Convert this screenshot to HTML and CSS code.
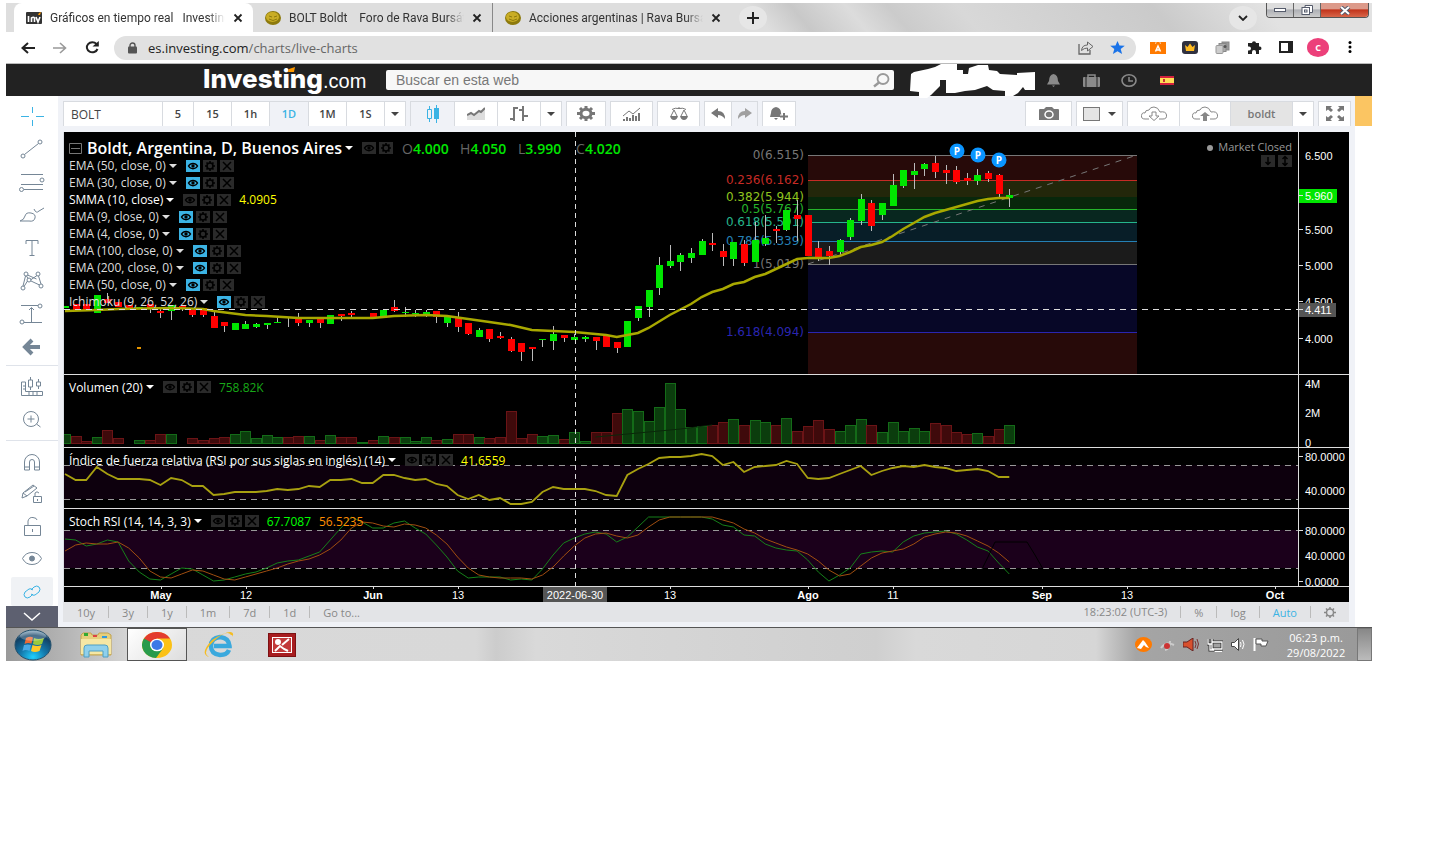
FILE: index.html
```html
<!DOCTYPE html>
<html lang="es">
<head>
    <meta charset="UTF-8">
    <meta name="viewport" content="width=device-width, initial-scale=1.0">
    <title>Gráficos en tiempo real - Investing.com</title>
    <link rel="stylesheet" href="styles.css">
</head>
<body>

<svg class="symbols" aria-hidden="true">
  <symbol id="eye" viewBox="0 0 14 12"><path d="M2.5 6C4.5 2.5 9.5 2.5 11.5 6C9.5 9.5 4.5 9.5 2.5 6Z" fill="none" stroke="currentColor" stroke-width="1.5"/><circle cx="7" cy="6" r="1.7" fill="currentColor"/></symbol>
  <symbol id="gear" viewBox="0 0 14 12"><circle cx="7" cy="6" r="3" fill="none" stroke="currentColor" stroke-width="1.6"/><path d="M7 1v2M7 9v2M2 6h2M10 6h2M3.5 2.5l1.4 1.4M9.1 8.1l1.4 1.4M10.5 2.5L9.1 3.9M4.9 8.1L3.5 9.5" stroke="currentColor" stroke-width="1.6"/></symbol>
  <symbol id="cross" viewBox="0 0 14 12"><path d="M3 2l8 8M11 2l-8 8" stroke="currentColor" stroke-width="1.5"/></symbol>
  <symbol id="close" viewBox="0 0 10 10"><path d="M1.5 1.5l7 7M8.5 1.5l-7 7" stroke="#222" stroke-width="1.8"/></symbol>
  <symbol id="coin" viewBox="0 0 16 14"><ellipse cx="8" cy="7" rx="8" ry="7" fill="#8d7a0c"/><ellipse cx="7.5" cy="6" rx="6.5" ry="5" fill="#c9ad25"/><path d="M4 5l3 1M9 6l3-1M4 8q4 3 8 0" stroke="#8d7a0c" fill="none"/></symbol>
</svg>

<div class="desktop">

  <div class="tabs">
    <div class="tab active">
      <svg width="16" height="12"><rect width="16" height="12" rx="1" fill="#333"/><path d="M2.5 4v6M5.500 10V6q2-1.500 3 0v4M10 5l2 5 2-5" stroke="#fff" stroke-width="1.6" fill="none"/><path d="M12 3l1-2 2-1-1 3z" fill="#f90"/></svg>
      <a href="#">Gráficos en tiempo real &nbsp; Investing.com</a>
      <button aria-label="Cerrar"><svg width="10" height="10"><use href="#close"/></svg></button>
    </div>
    <div class="tab">
      <svg width="16" height="14"><use href="#coin"/></svg>
      <a href="#">BOLT Boldt &nbsp;&nbsp; Foro de Rava Bursátil</a>
      <button aria-label="Cerrar"><svg width="10" height="10"><use href="#close"/></svg></button>
    </div>
    <div class="tab last">
      <svg width="16" height="14"><use href="#coin"/></svg>
      <a href="#">Acciones argentinas | Rava Bursátil</a>
      <button aria-label="Cerrar"><svg width="10" height="10"><use href="#close"/></svg></button>
    </div>
    <button class="round" aria-label="Nueva pestaña"><svg width="12" height="12"><path d="M6 0v12M0 6h12" stroke="#222" stroke-width="2"/></svg></button>
    <button class="round search-tabs" aria-label="Buscar pestañas"><svg width="10" height="6"><path d="M1 1l4 4 4-4" stroke="#222" stroke-width="1.8" fill="none"/></svg></button>
    <div class="window-buttons">
      <button aria-label="Minimizar"><svg width="12" height="6"><rect x=".5" y="1.5" width="11" height="3" fill="#fff" stroke="#555b6b"/></svg></button>
      <button aria-label="Restaurar"><svg width="12" height="10"><path d="M4 .5h7.5v7H9M4 .5V2" fill="#fff" stroke="#555b6b"/><rect x="1" y="2.5" width="7.5" height="7" fill="#fff" stroke="#555b6b"/><rect x="3.5" y="5" width="2.5" height="2" fill="#fff" stroke="#555b6b"/></svg></button>
      <button class="close" aria-label="Cerrar"><svg width="12" height="9"><path d="M2 1l8 7M10 1L2 8" stroke="#555b6b" stroke-width="4"/><path d="M2 1l8 7M10 1L2 8" stroke="#fff" stroke-width="2"/></svg></button>
    </div>
  </div>

  <div class="address-row">
    <button aria-label="Atrás"><svg width="14" height="12"><path d="M14 6H2M7 1L1.5 6 7 11" stroke="#222" stroke-width="2" fill="none"/></svg></button>
    <button aria-label="Adelante"><svg width="14" height="12"><path d="M0 6h12M7 1l5.5 5L7 11" stroke="#999" stroke-width="1.6" fill="none"/></svg></button>
    <button aria-label="Recargar"><svg width="14" height="13"><path d="M11.5 3A5.5 5 0 1 0 12.5 8" stroke="#222" stroke-width="2" fill="none"/><path d="M13.8 0v5.5H7.5z" fill="#222"/></svg></button>
    <div class="omnibox">
      <svg width="9" height="12"><rect y="4.5" width="9" height="7" rx="1" fill="#555"/><path d="M2 5V3.5a2.5 2.5 0 0 1 5 0V5" stroke="#555" stroke-width="1.4" fill="none"/></svg>
      <span class="url">es.investing.com<span>/charts/live-charts</span></span>
      <button aria-label="Compartir"><svg width="16" height="14"><path d="M1 3v10h11V9" stroke="#666" stroke-width="1.3" fill="none"/><path d="M3.5 9.5Q4 4 9.5 4V1l5.500 4.500-5.500 4.500V7Q6 7 3.5 9.5z" stroke="#666" fill="none"/></svg></button>
      <button aria-label="Favorito"><svg width="15" height="13"><path d="M7.5 0l2 4.400 5.300.4-4.100 3.300 1.400 4.900-4.600-2.700L2.900 13l1.400-4.900L.2 4.800l5.300-.4z" fill="#1a73e8"/></svg></button>
    </div>
    <div class="extensions">
      <button aria-label="Tienda"><svg width="16" height="13"><path d="M0 1h16v12H0z" fill="#ff7a00"/><path d="M5.500 3Q5.500 0 8 0t2.500 3" stroke="#fff" fill="none" opacity=".6"/><path d="M5.500 10.500L8 5l2.500 5.500M6.500 9h3" stroke="#fff" stroke-width="1.500" fill="none"/></svg></button>
      <button aria-label="Corona"><svg width="16" height="13"><rect width="16" height="13" rx="3" fill="#30313f"/><path d="M3 4l2.500 2L8 2.500 10.500 6 13 4l-1 6H4z" fill="#fb2"/></svg></button>
      <button aria-label="Copias"><svg width="15" height="13"><rect x="7" y="1" width="7" height="8" fill="#999" stroke="#888"/><rect x="4" y="2.500" width="7" height="8" fill="#aaa" stroke="#888"/><rect x="1" y="4.500" width="7" height="8" rx="1" fill="#ccc" stroke="#999"/><circle cx="10" cy="5.500" r="1.500" fill="#555"/></svg></button>
      <button aria-label="Extensiones"><svg width="15" height="13"><path d="M1 2h4a2 1.800 0 1 1 4 0h3v3.500a2 1.800 0 1 1 0 3.500v4H9V11a2 2 0 0 0-4 0v2H1V9.500h1a1.800 1.800 0 0 0 0-4H1z" fill="#222"/></svg></button>
      <button aria-label="Panel lateral"><svg width="14" height="12"><rect x="1" y="1" width="12" height="10" fill="none" stroke="#222" stroke-width="2"/><path d="M9 1h4v10H9z" fill="#222"/></svg></button>
      <button class="avatar" aria-label="Perfil">C</button>
      <button aria-label="Menú"><svg width="4" height="12"><circle cx="2" cy="1.500" r="1.500"/><circle cx="2" cy="6" r="1.500"/><circle cx="2" cy="10.500" r="1.500"/></svg></button>
    </div>
  </div>

  <header class="site-header">
    <a class="logo" href="#"><b>Investing</b>.com<svg width="8" height="5"><path d="M0 5l1-3 6-2-1 5z" fill="#f90"/></svg></a>
    <form class="search">
      <input type="text" aria-label="Buscar" placeholder="Buscar en esta web">
      <button type="button" aria-label="Buscar"><svg width="17" height="15"><ellipse cx="10" cy="6" rx="5.500" ry="5" fill="none" stroke="#999" stroke-width="1.800"/><path d="M6 9.500L1 13.500" stroke="#999" stroke-width="2.400"/></svg></button>
    </form>
    <svg class="scribble" width="126" height="32"><path d="M1 10L4 8 18 5 25 3 31 0H47V6H53V10H58L59 4 68 1H78L79 6 87 7 90 10 107 11V9L125 8V26H115L113 23 108 29 103 32H95V27L83 26 77 22 65 26 55 27 45 29H36V16H30V22L21 31 17 34H9V28L0 27Z" fill="#fff"/></svg>
    <button aria-label="Alertas"><svg width="13" height="13"><path d="M6.500 0Q11 1 11 7l2 3.500H0L2 7Q2 1 6.500 0zM5 11.500h3L6.500 13z" fill="#8a8a8a"/></svg></button>
    <button aria-label="Cartera"><svg width="17" height="13"><path d="M5 3V1h7v2" fill="none" stroke="#8a8a8a" stroke-width="1.500"/><path d="M3.500 3h10v10h-10zM0 4q0-1 1-1h1.500v10H1q-1 0-1-1zM14.500 3H16q1 0 1 1v8q0 1-1 1h-1.500z" fill="#8a8a8a"/></svg></button>
    <button aria-label="Hora"><svg width="16" height="13"><ellipse cx="8" cy="6.500" rx="7" ry="5.700" fill="none" stroke="#8a8a8a" stroke-width="1.600"/><path d="M8 3v4h4" fill="none" stroke="#8a8a8a" stroke-width="1.500"/></svg></button>
    <button aria-label="España"><svg width="14" height="9"><rect width="14" height="9" fill="#d4213d"/><rect y="2" width="14" height="5" fill="#fd5"/><rect x="3" y="3" width="2" height="3" fill="#c33"/></svg></button>
  </header>

  <div class="workspace">
    <nav class="tools">
      <div class="tool-group">
        <button class="on" aria-label="Cruz"><svg width="23" height="20"><path d="M0 10.500h8M15 10.500h8M11.500 1v6M11.500 14v6"/></svg></button>
        <button aria-label="Línea"><svg width="24" height="20"><circle cx="3" cy="17" r="2"/><circle cx="20" cy="3" r="2"/><path d="M4.500 15.500l14-11"/></svg></button>
        <button aria-label="Fibonacci"><svg width="26" height="20"><path d="M2 2.500h22M2 12.500h22M5 17.500h19"/><circle cx="23" cy="8" r="2"/><circle cx="2.500" cy="17.500" r="2"/></svg></button>
        <button aria-label="Pincel"><svg width="24" height="16"><path d="M0 14Q4 13 5 9t6-3 4 5-6 3zM14 2q2 5 5 2l5-3"/></svg></button>
        <button aria-label="Texto"><svg width="14" height="16"><path d="M1 4V.5h12V4M7 .5v15M4.500 15.500h5"/></svg></button>
        <button aria-label="Patrones"><svg width="24" height="20"><path d="M3 15L5.500 5M7.500 4l9 4M10.500 9L17 4.500M18.500 5l2.500 8M19.500 14L11 10M7.500 10L4 15.500M6.500 5L8 7.500"/><circle cx="3" cy="17" r="2"/><circle cx="6" cy="3" r="2"/><circle cx="9" cy="9" r="2"/><circle cx="18" cy="3" r="2"/><circle cx="21" cy="15" r="2"/></svg></button>
        <button aria-label="Medición"><svg width="24" height="20"><path d="M1 1.500h17M4 18.500h18M11.500 4v14M9 6l2.500-2.500L14 6"/><circle cx="20" cy="2" r="2"/><circle cx="2" cy="18" r="2"/></svg></button>
        <button aria-label="Atrás"><svg width="18" height="16"><path d="M17 8H3M9 1L2 8l7 7" stroke-width="4"/></svg></button>
      </div>
      <div class="tool-group">
        <button aria-label="Regla"><svg width="24" height="20"><path d="M1.500 5v13.500h21v-4H5.500V5zM5 9H3M5 12H3M9 15v3M13 15v3M17 15v3M10.500 0v3M10.500 10v3M18.500 2v3M18.500 9v3M8.500 3h4v7h-4zM16.500 5h4v4h-4z"/></svg></button>
        <button aria-label="Ampliar"><svg width="20" height="17"><circle cx="9" cy="8" r="7.500"/><path d="M14.500 13l4 3M5.500 8h7M9 4.500v7"/></svg></button>
      </div>
      <div class="tool-group">
        <button aria-label="Imán"><svg width="16" height="17"><path d="M.5 16V8a7.500 7.500 0 0 1 15 0v8h-5V8a2.500 2.500 0 0 0-5 0v8zM.5 13h5M10.500 13h5"/></svg></button>
        <button aria-label="Bloquear dibujo"><svg width="22" height="20"><path d="M1 14l1-5L12 1l4 3L6 12zM2 9l4 3M4 8l9-6M12.500 12.500h8v6h-8zM14 12V9q2-2.500 4 0M16.500 15v2"/></svg></button>
        <button aria-label="Desbloquear"><svg width="17" height="19"><path d="M.5 8.500h16v10H.5zM4 8V4q1-4 5-3.500T13 3M8.500 12v3"/></svg></button>
        <button aria-label="Mostrar"><svg width="20" height="13"><path d="M.5 6.500Q3.500.5 10 .5t9.500 6q-3 6-9.500 6t-9.500-6z"/><circle cx="10" cy="6.500" r="2.500" fill="#758696"/></svg></button>
        <button class="on boxed" aria-label="Enlazar"><svg width="18" height="14"><path d="M8 5l3-3q3-2 5 0t0 5l-4 3q-2 1-4-1M10 9l-3 3q-3 2-5 0t0-5l4-3q2-1 4 1"/></svg></button>
      </div>
      <button class="collapse" aria-label="Plegar"><svg width="18" height="8"><path d="M1 0l8 7 8-7" fill="none" stroke="#fff" stroke-width="1.500"/></svg></button>
    </nav>

    <main>
      <div class="chart-bar">
        <div class="group">
          <input class="symbol" type="text" aria-label="Símbolo" value="BOLT">
          <button class="w30">5</button><button>15</button><button>1h</button><button class="on w39">1D</button><button>1M</button><button>1S</button>
          <button class="w20" aria-label="Más intervalos"><i class="caret"></i></button>
        </div>
        <div class="group">
          <button class="on w43" aria-label="Velas"><svg width="13" height="18"><path d="M3.500 1v3M3.500 13v4M10.500 0v18" stroke="#3bb3e4"/><path d="M1.500 4.500h4v9h-4z" fill="none" stroke="#3bb3e4"/><path d="M8 3h5v11H8z" fill="#3bb3e4"/></svg></button>
          <button class="w43" aria-label="Área"><svg width="18" height="13"><path d="M0 8l4-2 3 2 5-4 2 1 4-4v12H0z" fill="#ddd"/><path d="M0 8l4-2 3 2 5-4 2 1 4-4" fill="none" stroke="#777" stroke-width="2"/></svg></button>
          <button class="w43" aria-label="Barras"><svg width="18" height="15"><path d="M0 13h4M4 15V1M4 2h4M13 0v15M9 4h4M13 10h5" fill="none" stroke="#777" stroke-width="2"/></svg></button>
          <button class="w20" aria-label="Más estilos"><i class="caret"></i></button>
        </div>
        <div class="group">
          <button aria-label="Propiedades"><svg width="18" height="15"><ellipse cx="9" cy="7.500" rx="5" ry="4.200" fill="none" stroke="#777" stroke-width="3"/><path d="M9 0v3M9 12v3M0 7.500h3M15 7.500h3M3 2l2 2M15 2l-2 2M3 13l2-2M15 13l-2-2" stroke="#777" stroke-width="3"/></svg></button>
        </div>
        <div class="group">
          <button class="w41" aria-label="Indicadores"><svg width="18" height="14"><path d="M1 12v2M4 10v4M7 11v3M10 8v6M13 9v5M16 6v8" stroke="#777" stroke-width="2"/><path d="M0 9l6-5 4 3 7-6" fill="none" stroke="#777"/></svg></button>
        </div>
        <div class="group">
          <button class="w41" aria-label="Comparar"><svg width="18" height="14"><path d="M2 2.500q3-2 7-1 4-1 7 1M9 0v1M4 3L1 9M4 3l3 6M14 3l-3 6M14 3l3 6" fill="none" stroke="#777"/><path d="M0 9h8q-1 4-4 4T0 9zM10 9h8q-1 4-4 4t-4-4z" fill="#777"/></svg></button>
        </div>
        <div class="group">
          <button class="w26" aria-label="Deshacer"><svg width="14" height="11"><path d="M0 5l7-5v3q7 0 7 8-3-4-7-4v3z" fill="#777"/></svg></button>
          <button class="w26 off" aria-label="Rehacer"><svg width="14" height="11"><path d="M14 5L7 0v3Q0 3 0 11q3-4 7-4v3z" fill="#a0a0a0"/></svg></button>
        </div>
        <div class="group">
          <button class="w32" aria-label="Crear alerta"><svg width="18" height="14"><path d="M6 0q5 1 5 6l1 4H0l1-4Q1 1 6 0zM4 11h4l-2 2z" fill="#777"/><path d="M14 6v7M10 9.500h8" stroke="#fff" stroke-width="4"/><path d="M14 6v7M10 9.500h8" stroke="#777" stroke-width="2"/></svg></button>
        </div>
        <div class="group push">
          <button class="w45" aria-label="Imagen"><svg width="20" height="13"><path d="M0 3q0-1 1-1h4l2-2h6l2 2h4q1 0 1 1v10H0z" fill="#777"/><ellipse cx="10" cy="7.500" rx="4" ry="3.500" fill="none" stroke="#fff" stroke-width="1.500"/></svg></button>
        </div>
        <div class="group">
          <button class="w45" aria-label="Diseño"><svg width="17" height="14"><rect x=".5" y=".5" width="16" height="13" fill="#e4e4e4" stroke="#777"/></svg><i class="caret"></i></button>
        </div>
        <div class="group">
          <button class="w51" aria-label="Cargar"><svg width="26" height="15"><path d="M8 13H4Q0 13 .5 9.500T4 7q0-3 4-3 1-3 5-3t6 5q6-1 6.500 3T22 13h-4M11 6h4v4h3l-5 4.500L8 10h3z" fill="none" stroke="#888"/></svg></button>
          <button class="w51" aria-label="Guardar"><svg width="26" height="15"><path d="M8 13H4Q0 13 .5 9.500T4 7q0-3 4-3 1-3 5-3t6 5q6-1 6.500 3T22 13h-4" fill="none" stroke="#888"/><path d="M13 6l5 4h-3v5h-4v-5H8z" fill="#888"/></svg></button>
          <button class="layout-name">boldt</button>
          <button class="w20" aria-label="Más diseños"><i class="caret"></i></button>
        </div>
        <div class="group">
          <button class="w30" aria-label="Pantalla completa"><svg width="18" height="15"><path d="M0 0h6L4.300 1.700 7 4 5 6 2 3.500 0 5zM18 0h-6l1.700 1.700L11 4l2 2 3-2.500L18 5zM0 15h6l-1.700-1.700L7 11 5 9l-3 2.500L0 10zM18 15h-6l1.700-1.700L11 11l2-2 3 2.500 2-1.500z" fill="#777"/></svg></button>
        </div>
      </div>

      <div class="chart">
        <section class="pane price">
          <svg class="plot" id="price-plot"></svg>
          <svg class="axis" id="price-axis"></svg>
          <div class="legend">
            <h1><svg width="13" height="11"><path d="M.5 .5h12v10H.5zM2 5.500h9" fill="none" stroke="#777"/></svg>Boldt, Argentina, D, Buenos Aires<i class="caret"></i><span class="chips"><button aria-label="Mostrar"><svg><use href="#eye"/></svg></button><button aria-label="Formato"><svg><use href="#gear"/></svg></button></span>
              <span class="ohlc">O<b>4.000</b></span><span class="ohlc">H<b>4.050</b></span><span class="ohlc">L<b>3.990</b></span><span class="ohlc">C<b>4.020</b></span></h1>
            <ul id="studies"></ul>
          </div>
          <div class="market">
            <span>Market Closed</span>
            <div class="chips"><button aria-label="Bajar"><svg viewBox="0 0 14 12"><path d="M7 2v7M4.500 7L7 9.500 9.500 7" fill="none" stroke="currentColor" stroke-width="1.500"/></svg></button><button aria-label="Ajustar"><svg viewBox="0 0 14 12"><path d="M7 2v8M4.500 4L7 1.500 9.500 4M4.500 8L7 10.500 9.500 8" fill="none" stroke="currentColor" stroke-width="1.500"/></svg></button></div>
          </div>
        </section>
        <section class="pane volume">
          <svg class="plot" id="volume-plot"></svg>
          <svg class="axis" id="volume-axis"></svg>
          <div class="legend" data-name="Volumen (20)" data-values="758.82K:#18a818"></div>
        </section>
        <section class="pane rsi">
          <svg class="plot" id="rsi-plot"></svg>
          <svg class="axis" id="rsi-axis"></svg>
          <div class="legend" data-name="Índice de fuerza relativa (RSI por sus siglas en inglés) (14)" data-values="41.6559:#ffff00"></div>
        </section>
        <section class="pane stoch">
          <svg class="plot" id="stoch-plot"></svg>
          <svg class="axis" id="stoch-axis"></svg>
          <div class="legend" data-name="Stoch RSI (14, 14, 3, 3)" data-values="67.7087:#00ff00 56.5235:#ff8c00"></div>
        </section>
        <svg class="time-axis" id="time-axis"></svg>
        <i class="crosshair"></i>
      </div>

      <div class="range-bar">
        <button>10y</button><button>3y</button><button>1y</button><button>1m</button><button>7d</button><button>1d</button><button>Go to...</button>
        <span class="clock">18:23:02 (UTC-3)</span>
        <button>%</button><button>log</button><button class="on">Auto</button><button aria-label="Ajustes"><svg width="12" height="11"><circle cx="6" cy="5.500" r="3.500" fill="none" stroke="#888" stroke-width="1.500"/><path d="M6 0v2M6 9v2M0 5.500h2M10 5.500h2M2 1.500l1.400 1.400M8.600 8.100L10 9.500M10 1.500L8.600 2.900M3.400 8.100L2 9.500" stroke="#888" stroke-width="1.500"/></svg></button>
      </div>
    </main>
    <aside><div class="banner"></div></aside>
  </div>

  <footer class="taskbar">
    <button class="start" aria-label="Inicio"><svg width="38" height="32">
      <defs><radialGradient id="orb" cx=".5" cy=".9" r=".9"><stop offset="0" stop-color="#1fd0ff"/><stop offset=".4" stop-color="#1478ab"/><stop offset=".8" stop-color="#123f63"/><stop offset="1" stop-color="#9ab9cc"/></radialGradient></defs>
      <ellipse cx="19" cy="16" rx="18" ry="15" fill="url(#orb)" stroke="#24506c"/>
      <path d="M12 9q4-2 7-.5l-1.500 6q-4-1-7 .5z" fill="#ee6a35"/><path d="M20 9q4 2 10 0l-2 6q-5 2-9 0z" fill="#9aca3c"/><path d="M10 16q4-1 7 0l-1.500 6q-4-2-7 0z" fill="#4aa9e6"/><path d="M18.500 16q5 2 9 0l-2 6q-5 2-8.500 0z" fill="#ffc928"/>
      <ellipse cx="19" cy="7" rx="13" ry="5" fill="#fff" opacity=".25"/></svg></button>
    <button aria-label="Explorador"><svg width="32" height="26"><path d="M1 3l2-2h8l1 2h6l1-2h9l3 2v20H1z" fill="#e6cf7c" stroke="#c1a350"/><path d="M4 1h4v3H4z" fill="#3a3"/><path d="M13 3h4v2h-4z" fill="#d44"/><path d="M22 4h5v2h-5z" fill="#39d"/><path d="M1 7h30v15H1z" fill="#f6e7a4"/><path d="M4 25V16q0-3 3-3h18q3 0 3 3v9h-5v-6H9v6z" fill="#8fd0ec" stroke="#4f9fc4"/></svg></button>
    <button class="active" aria-label="Chrome"><svg width="30" height="26" viewBox="0 0 30 26"><ellipse cx="15" cy="13" rx="15" ry="13" fill="#fbc116"/><path d="M2 6.500A15 13 0 0 1 28 6.500H15L8 16z" fill="#e33b2e"/><path d="M2 6.500A15 13 0 0 0 14 26l7-9.500-6-3z" fill="#289b4b"/><ellipse cx="15" cy="13" rx="7" ry="6.300" fill="#fff"/><ellipse cx="15" cy="13" rx="5.500" ry="5" fill="#3b78e7"/></svg></button>
    <button aria-label="Internet Explorer"><svg width="30" height="26"><path d="M25 18q-2 5-9 5-9-1-9-9t9-9q9 1 9.500 9H10" fill="none" stroke="#3ba9dd" stroke-width="4.500"/><path d="M5 25Q-3 21 10 9T27 3q3 0 1 4 3-7-2-7T8 8Q-5 22 5 25z" fill="#f4bc22"/></svg></button>
    <button aria-label="Editor de imágenes"><svg width="28" height="24"><rect x=".5" y=".5" width="27" height="23" fill="#a81d20" stroke="#7c1113"/><rect x="4.500" y="4.500" width="19" height="15" fill="#c23a3a" stroke="#fff"/><circle cx="10" cy="9" r="3" fill="#fff"/><path d="M7 18l5-5 4 3 4 2M14 12l7-6" stroke="#fff" stroke-width="2" fill="none"/></svg></button>
    <div class="tray">
      <svg width="17" height="15"><ellipse cx="8.500" cy="7.500" rx="8.500" ry="7.500" fill="#ff7a00"/><path d="M2 11l6-8 2 2 4 6-3-1-2-2-3 4z" fill="#fff"/></svg>
      <svg width="15" height="12"><path d="M1 9q5-7 13-3M5 11q5-1 5-9" stroke="#ccc" stroke-width="2" fill="none"/><circle cx="7" cy="7" r="3" fill="#c33"/></svg>
      <svg width="16" height="13"><path d="M0 4h4l6-4v13l-6-4H0z" fill="#d8502d" stroke="#622"/><path d="M12 3q2 3 0 7M14 1q3 5 0 10" stroke="#733" fill="none"/></svg>
      <svg width="16" height="14"><path d="M5 4h10v7H5zM8 13.500h7M1 1v5h4V1M3 6v6h4" fill="none" stroke="#333" stroke-width="3"/><path d="M5 4h10v7H5zM8 13.500h7M1 1v5h4V1M3 6v6h4" fill="none" stroke="#fff" stroke-width="1.300"/></svg>
      <svg width="14" height="13"><path d="M.5 4.500h3l4-4v12l-4-4h-3z" fill="#fff" stroke="#444"/><path d="M9.500 4q1 2 0 5M11.500 2q3 4 0 9" stroke="#fff" fill="none"/></svg>
      <svg width="16" height="13"><path d="M1.500 0v13" stroke="#fff" stroke-width="2"/><path d="M3 1h6v2h6l-2 5H8V6H3z" fill="#fff" stroke="#555"/></svg>
    </div>
    <div class="date"><span>06:23 p.m.</span><span>29/08/2022</span></div>
    <button class="show-desktop" aria-label="Mostrar escritorio"></button>
  </footer>
</div>

<script src="chart.js"></script>
</body>
</html>
```
FILE: styles.css
```css
* {
    margin: 0;
    padding: 0;
    box-sizing: border-box;
}
body {
    background: #fff;
    font-family: 'Open Sans', sans-serif;
    font-size: 11px;
    color: #444;
}
button {
    display: flex;
    align-items: center;
    justify-content: center;
    border: 0;
    background: none;
    font: inherit;
    color: inherit;
}
input {
    border: 0;
    font: inherit;
    color: inherit;
}
a {
    color: inherit;
    text-decoration: none;
}
svg {
    flex-shrink: 0;
}
.symbols {
    position: absolute;
    width: 0;
    height: 0;
}
.desktop {
    margin: 3px 68px 0 6px;
}
.caret {
    border: 4px solid transparent;
    border-top-color: currentColor;
    border-bottom: 0;
}

/* browser tabs */
.tabs {
    display: flex;
    align-items: center;
    height: 29px;
    padding-left: 8px;
    background: linear-gradient(50deg, #dedede 55%, #c8c8c8 58%, #dcdcdc 62%, #cbcbcb 65%, #d8d8d8 70%, #cacaca 84%, #e2e2e2 92%);
}
.tab {
    display: flex;
    align-items: center;
    width: 239px;
    height: 29px;
    padding: 0 10px 0 12px;
    background: #dedede;
    font-family: Roboto, sans-serif;
    font-size: 12px;
    color: #333;
}
.tab.active {
    background: #fff;
    border-radius: 8px 8px 0 0;
}
.tab + .tab + .tab {
    border-left: 1px solid #888;
}
.tab a {
    flex: 1;
    margin: 0 8px;
    overflow: hidden;
    white-space: nowrap;
    mask-image: linear-gradient(90deg, #000 90%, transparent);
}
.round {
    width: 28px;
    height: 24px;
    margin-left: 8px;
    border-radius: 50%;
    background: #e6e6e6;
}
.search-tabs {
    margin-left: auto;
}
.window-buttons {
    display: flex;
    align-self: flex-start;
    margin: 0 3px 0 9px;
    border: 1px solid #555;
    border-top: 0;
    border-radius: 0 0 4px 4px;
    overflow: hidden;
}
.window-buttons button {
    width: 27px;
    height: 14px;
    background: linear-gradient(#ddd 40%, #aeb0b5 50%, #ccc);
    border-right: 1px solid #666;
}
.window-buttons .close {
    width: 47px;
    border: 0;
    background: linear-gradient(#dc9a8a 40%, #c2351c 50%, #d8664a);
}

/* address bar */
.address-row {
    display: flex;
    align-items: center;
    height: 32px;
    padding: 0 6px;
    border-bottom: 1px solid #bbb;
}
.address-row > button,
.extensions button {
    width: 32px;
    height: 28px;
}
.omnibox {
    flex: 1;
    display: flex;
    align-items: center;
    gap: 16px;
    height: 24px;
    margin: 0 6px;
    padding: 0 11px 0 14px;
    border-radius: 12px;
    background: #e1e1e1;
}
.url {
    flex: 1;
    margin-left: -5px;
    font-size: 13px;
    color: #222;
}
.url span {
    color: #666;
}
.extensions {
    display: flex;
}
.extensions .avatar {
    width: 22px;
    height: 19px;
    margin: 5px;
    border-radius: 50%;
    background: #ec407a;
    color: #fff;
    font-size: 9px;
    font-weight: bold;
}

/* site header */
.site-header {
    display: flex;
    align-items: center;
    height: 32px;
    padding-left: 197px;
    background: #222;
}
.logo {
    position: relative;
    width: 183px;
    font-family: 'Liberation Sans', sans-serif;
    font-size: 20px;
    line-height: 32px;
    color: #fff;
}
.logo b {
    font-family: Inter, sans-serif;
    font-size: 26px;
    font-weight: 800;
}
.logo svg {
    position: absolute;
    left: 85px;
    top: 4px;
}
.search {
    display: flex;
    width: 508px;
    height: 20px;
    padding: 0 4px 0 10px;
    border-radius: 2px;
    background: #f7f7f7;
    font-family: 'Liberation Sans', sans-serif;
    font-size: 14px;
}
.search input {
    flex: 1;
    background: none;
}
.search input::placeholder {
    color: #777;
    opacity: 1;
}
.scribble {
    margin: 0 4px 0 16px;
    overflow: visible;
    z-index: 1;
}
.site-header > button {
    width: 26px;
    margin-right: 12px;
}

/* workspace */
.workspace {
    display: flex;
    height: 531px;
}
.tools {
    display: flex;
    flex-direction: column;
    width: 52px;
    background: #fff;
}
.tool-group {
    padding-top: 5px;
    border-bottom: 1px solid #dfe3ea;
}
.tool-group:first-child button {
    height: 33px;
    padding-bottom: 3px;
}
.tool-group:nth-child(2) {
    padding-bottom: 5px;
}
.tool-group:nth-child(3) {
    border: 0;
}
.tools button {
    width: 52px;
    height: 32px;
}
.tools svg {
    fill: none;
    stroke: #758696;
    overflow: visible;
}
.tools .on svg {
    stroke: #3bb3e4;
}
.tools .boxed {
    width: 42px;
    height: 29px;
    margin: 3px 5px 0;
    background: #f0f2f5;
    border-radius: 2px;
}
.tools .collapse {
    flex: 1;
    background: #5d6070;
}
main {
    flex: 1;
    min-width: 0;
    padding: 5px 4px 0 5px;
    background: #f0f2f7;
}
.chart-bar {
    display: flex;
    gap: 4px;
    height: 31px;
}
.group {
    display: flex;
    height: 25px;
    border: 1px solid #d8dbe0;
    border-bottom: 0;
    background: #fff;
}
.group > * + * {
    border-left: 1px solid #d8dbe0;
}
.group button {
    width: 38px;
    gap: 8px;
    padding-bottom: 1px;
    color: #444;
    font-weight: 600;
}
.group .on {
    background: #f0f2f7;
    color: #3bb3e4;
}
.group .off {
    background: #f0f2f7;
}
.group .w20 { width: 21px; }
.group .w26 { width: 26px; }
.group .w30 { width: 31px; }
.group .w32 { width: 32px; }
.group .w39 { width: 39px; }
.group .w41 { width: 41px; }
.group .w43 { width: 43px; }
.group .w45 { width: 45px; }
.group .w51 { width: 51px; }
.group .layout-name {
    width: 62px;
    background: #e4e4e4;
    color: #777;
}
.symbol {
    width: 98px;
    padding: 0 7px;
    font-size: 12px;
}
.push {
    margin-left: auto;
}

/* chart */
.chart {
    position: relative;
    margin-right: 2px;
    border-left: 1px solid #dcdfe5;
    background: #000;
    color: #ddd;
}
.pane {
    position: relative;
    display: flex;
    border-bottom: 1px solid #ddd;
}
.price { height: 243px; }
.volume { height: 73px; }
.rsi { height: 61px; }
.stoch { height: 78px; }
.plot {
    flex: 1;
    min-width: 0;
    height: 100%;
}
.axis {
    width: 51px;
    height: 100%;
    border-left: 1px solid #ddd;
}
.axis text,
.time-axis text {
    font-family: 'Liberation Sans', sans-serif;
    font-size: 11px;
    fill: #fff;
}
.time-axis text {
    text-anchor: middle;
}
.time-axis .month {
    font-weight: bold;
}
.time-axis {
    display: block;
    width: 100%;
    height: 15px;
}
.fib {
    font-family: 'DejaVu Sans', sans-serif;
    font-size: 12px;
    text-anchor: end;
}
.event {
    font-size: 10px;
    font-weight: bold;
    fill: #fff;
    text-anchor: middle;
}
.crosshair {
    position: absolute;
    left: 511px;
    top: 0;
    bottom: 15px;
    width: 1px;
    background: repeating-linear-gradient(#ddd 0 5px, transparent 5px 9px);
}
.legend {
    position: absolute;
    left: 5px;
    top: 4px;
    font-size: 12px;
    font-weight: 500;
}
.legend h1,
.legend li,
.row {
    display: flex;
    align-items: center;
    height: 17px;
    white-space: nowrap;
}
.legend h1 {
    height: 24px;
    font-size: 16px;
    font-weight: 600;
    color: #fff;
}
.legend h1 svg {
    margin-right: 5px;
}
.legend h1 .chips svg {
    margin: 0;
}
.legend .caret {
    margin: 0 9px 0 3px;
}
.ohlc {
    width: 49px;
    margin-left: 9px;
    font-size: 14px;
    font-weight: 400;
    color: #666;
}
.ohlc b {
    font-weight: 600;
    color: #00e600;
}
.row {
    height: 16px;
    color: #fff;
}
.legend ul {
    margin-top: -3px;
    list-style: none;
}
.legend .visible {
    color: #fff;
}
.chips {
    display: flex;
    gap: 3px;
}
.chips button {
    width: 14px;
    height: 12px;
    background: #2a2a2a;
    color: #000;
}
.chips svg {
    width: 14px;
    height: 12px;
}
.chips .lit {
    background: #3bb3e4;
}
.value {
    margin-left: 8px;
}
.market {
    position: absolute;
    right: 57px;
    top: 7px;
    color: #999;
    line-height: 16px;
}
.market span::before {
    content: '';
    display: inline-block;
    width: 6px;
    height: 6px;
    margin-right: 5px;
    border-radius: 50%;
    background: #999;
}
.market .chips {
    justify-content: flex-end;
}

.range-bar {
    display: flex;
    align-items: center;
    height: 20px;
    margin-right: 2px;
    padding-left: 1px;
    background: #e3e4e7;
    color: #888;
}
.range-bar button {
    height: 12px;
    padding: 0 13px;
    border-right: 1px solid #bbb;
}
.range-bar button:nth-of-type(7),
.range-bar button:last-child {
    border: 0;
}
.range-bar .on {
    color: #3bb3e4;
}
.clock {
    margin-left: auto;
    padding-right: 13px;
    line-height: 12px;
    border-right: 1px solid #bbb;
}
aside {
    width: 17px;
}
.banner {
    height: 30px;
    background: #fbc562;
}

/* taskbar */
.taskbar {
    display: flex;
    align-items: center;
    height: 34px;
    border-top: 1px solid #555;
    background: linear-gradient(90deg, #999, #b5b5b5 60px, #d9d9d9 130px, #d8d8d8 470px, #ccc 490px, #d9d9d9 530px, #cfcfcf 870px, #d9d9d9 910px, #d6d6d6 1090px, #a5a5a5 1130px, #999);
}
.taskbar button {
    width: 62px;
    height: 33px;
}
.taskbar .start {
    width: 59px;
    padding-right: 6px;
}
.taskbar .active {
    width: 60px;
    border: 1px solid #555;
    background: linear-gradient(135deg, #fff, #ddd);
}
.taskbar .active + button {
    width: 64px;
}
.tray {
    display: flex;
    align-items: center;
    gap: 8px;
    margin-left: auto;
}
.date {
    display: flex;
    flex-direction: column;
    align-items: center;
    width: 78px;
    margin-left: 8px;
    line-height: 15px;
    color: #fff;
}
.taskbar .show-desktop {
    width: 15px;
    margin-left: 2px;
    border: 1px solid #777;
    background: linear-gradient(#888, #bbb);
}
```
FILE: chart.js
```js
const STEP = 10.61;
const x = i => 1 + i * STEP;

// high, body top, body bottom, low, direction, volume
const bars = [
  [174,174,176,176,1,9],[172,172,178,178,0,7],[172,172,179,179,0,2],[163,163,181,181,1,6],[161,167,171,171,0,13],
  [170,170,175,175,0,5],[173,173,176,178,0,0],[175,175,176,177,1,3],[172,172,177,181,0,3],[176,179,181,186,0,9],
  [173,173,179,188,1,9],[174,174,176,179,0,0],[178,178,183,185,0,5],[176,176,183,185,0,3],[180,184,196,196,0,5],
  [190,190,194,200,0,6],[191,191,198,198,1,9],[189,192,197,197,1,12],[191,192,195,196,1,5],[191,191,193,197,1,8],
  [185,190,191,191,1,6],[186,190,190,195,0,6],[181,186,191,194,0,7],[188,188,191,195,1,7],[187,187,191,196,0,3],
  [183,183,192,192,1,8],[182,182,184,189,0,6],[179,181,183,187,0,6],[185,185,187,187,1,1],[181,181,186,186,0,3],
  [178,178,186,186,1,7],[168,175,179,180,0,6],[175,180,181,185,1,6],[178,181,182,185,1,2],[178,180,183,185,1,6],
  [179,179,185,191,0,3],[185,185,191,195,1,4],[180,186,195,200,0,9],[191,191,202,203,0,9],[196,198,205,205,1,6],
  [197,197,207,210,0,5],[200,204,206,207,0,6],[205,207,219,220,0,32],[211,211,220,229,0,5],[215,215,217,229,0,9],
  [207,207,208,215,1,7],[194,202,209,218,1,8],[203,203,206,210,0,4],[202,205,208,208,1,11],[204,205,207,210,1,2],
  [205,205,209,218,0,11],[203,203,215,215,0,11],[210,210,216,221,0,30],[189,189,215,215,1,34],[174,174,186,189,1,32],
  [158,158,175,185,1,22],[125,133,156,163,1,36],[113,129,134,136,1,60],[121,123,130,139,1,34],[116,121,126,131,1,16],
  [107,109,123,123,1,17],[101,111,113,119,0,18],[112,119,125,134,0,21],[110,110,127,134,1,24],[108,112,131,134,0,18],
  [90,108,130,130,1,23],[83,106,112,114,1,21],[94,97,99,111,0,18],[78,78,98,99,1,25],[68,83,87,109,0,12],
  [83,83,124,124,0,17],[109,116,127,129,0,23],[114,119,124,133,0,14],[107,108,120,123,1,12],[86,88,105,108,1,18],
  [62,67,89,93,1,24],[68,71,94,99,0,18],[71,71,83,88,1,11],[42,53,74,74,1,21],[38,38,54,56,1,12],
  [31,39,43,57,1,15],[31,32,37,44,1,12],[24,31,40,46,0,20],[33,38,41,52,0,18],[34,38,50,52,0,11],
  [41,46,49,53,0,9],[37,43,49,53,1,10],[39,41,47,50,0,7],[42,43,62,65,0,14],[57,63,66,75,1,18]
];

const smma = [[0,179],[3,178],[5,177],[10,176],[13,177],[14,179],[17,183],[19,184],[22,186],[29,186],[31,184],[34,183],
  [36,184],[38,187],[40,190],[42,193],[44,198],[48,200],[51,203],[52,205],[53,203],[54,201],[55,196],[57,183],[59,172],
  [60,165],[61,160],[62,157],[63,152],[64,150],[65,145],[66,142],[67,137],[68,132],[69,127],[70,126],[72,126],[73,124],
  [74,120],[75,115],[76,113],[77,110],[78,104],[79,97],[80,91],[81,85],[82,81],[83,78],[84,75],[85,72],[86,69],[87,67],[88,66],[89,66]];

const rsi = [26,32,32,19,26,31,31,31,32,37,30,32,38,38,47,46,44,44,44,43,41,42,41,38,39,32,32,31,35,35,27,27,30,32,31,36,38,47,51,
  47,52,50,56,56,54,44,39,41,41,41,43,47,48,27,21,16,10,9,9,8,6,8,17,14,24,19,18,17,13,16,30,31,30,26,22,18,27,23,20,18,19,17,19,
  20,23,22,21,23,29,29];

const stochK = [30,31,37,35,31,33,52,63,70,71,65,59,60,66,72,71,68,65,63,59,54,52,51,47,43,31,19,8,13,19,19,14,12,19,25,36,48,62,69,
  68,68,68,71,70,71,60,46,34,29,25,23,25,33,28,18,8,8,8,8,8,8,10,16,18,26,27,35,39,41,42,51,63,72,66,59,45,43,42,43,33,27,24,23,
  22,25,31,38,42,54,65];

const stochD = [42,36,34,35,35,33,39,49,62,68,69,65,61,62,66,70,71,68,65,62,59,55,52,50,46,40,31,19,13,14,17,18,15,16,19,26,35,48,59,
  66,68,69,69,69,70,66,58,47,37,29,25,24,27,29,26,18,11,8,8,8,8,8,11,14,20,24,30,34,38,41,45,52,61,67,65,57,49,44,42,40,35,28,25,
  23,24,27,32,37,44,53];

const fibs = [
  [23, '0(6.515)', '#777777', '#270a09'],
  [48, '0.236(6.162)', '#c62b25', '#23270a'],
  [65, '0.382(5.944)', '#8fc31f', '#08270b'],
  [77, '0.5(5.767)', '#25b52b', '#08271f'],
  [90, '0.618(5.591)', '#25b58c', '#081e28'],
  [109, '0.786(5.339)', '#2580b5', '#1b1b1b'],
  [132, '1(5.019)', '#777777', '#070727'],
  [200, '1.618(4.094)', '#2a25b0', '#270a09']
];

const rect = (rx, y, w, h, fill, extra = '') => `<rect x="${rx}" y="${y}" width="${w}" height="${h}" fill="${fill}" ${extra}/>`;
const hline = (y, color, dash = '', x1 = 0, x2 = '100%') =>
  `<line x1="${x1}" x2="${x2}" y1="${y + .5}" y2="${y + .5}" stroke="${color}" stroke-dasharray="${dash}"/>`;
const curve = (points, color, width) =>
  `<polyline points="${points.map(p => x(p[0]) + ',' + p[1]).join(' ')}" fill="none" stroke="${color}" stroke-width="${width}"/>`;
const indexed = values => values.map((v, i) => [i, v]);
const put = (id, markup) => document.getElementById(id).innerHTML = markup;

// price pane
let price = '';
fibs.forEach(([y, label, color, fill], i) => {
  const bottom = i < fibs.length - 1 ? fibs[i + 1][0] : 242;
  price += rect(744, y, 329, bottom - y, fill);
  if (i !== 2) price += hline(y, color, '', 744, 1073);
  price += `<text class="fib" x="740" y="${y + 4}" fill="${color}">${label}</text>`;
});
price += '<line x1="744" y1="132" x2="1073" y2="23" stroke="#777" stroke-dasharray="6 6"/>';
price += rect(73, 215, 4, 2, '#e69500');
bars.forEach(([high, top, bottom, low, up], i) => {
  const cx = Math.round(x(i));
  price += rect(cx, high, 1, low - high, '#bbb');
  if (bottom > top) price += rect(cx - 3, top, 7, bottom - top, up ? '#00e600' : '#ff0000');
});
price += curve(smma, '#a8a800', 2.5);
price += hline(177, '#ddd', '6 5');
[[893, 19], [914, 23], [935, 28]].forEach(([cx, cy]) => {
  price += `<circle cx="${cx}" cy="${cy}" r="7.5" fill="#0a95ff"/><text class="event" x="${cx}" y="${cy + 4}">P</text>`;
});
put('price-plot', price);

// volume pane
put('volume-plot', bars.map((bar, i) => {
  const h = bar[5];
  return h ? rect(Math.round(x(i) - 5) + .5, 68.5 - h, 10, h, bar[4] ? '#0b3d0d' : '#3f0a0b', `stroke="${bar[4] ? '#146b18' : '#6b1416'}"`) : '';
}).join('') + curve([[50, 62], [54, 58], [58, 54], [61, 50]], '#0a280a', 1));

put('rsi-plot', rect(0, 17, '100%', 34, '#0d000d') + hline(17, '#999', '6 5') + hline(51, '#999', '6 5') + curve(indexed(rsi), '#a8a010', 1.8));

put('stoch-plot', rect(0, 21, '100%', 38, '#1b001b') + hline(21, '#999', '6 5') + hline(59, '#999', '6 5')
  + curve(indexed(stochK), '#16801a', 1) + curve(indexed(stochD), '#a04e10', 1)
  + '<path d="M918 60l5-10 8-17h32l8 13 8 14" fill="none" stroke="#000"/>');

// scales
const ticks = list => list.map(([y, label, tick]) => (tick ? rect(0, y - 1, 4, 1, '#ddd') : '') + `<text x="6" y="${y + 4}">${label}</text>`).join('');
put('price-axis', ticks([[24, '6.500'], [98, '5.500', 1], [134, '5.000', 1], [170, '4.500', 1], [207, '4.000', 1]])
  + rect(0, 57, 38, 14, '#00e600') + rect(0, 171, 37, 14, '#555')
  + ticks([[64, '5.960', 1], [178, '4.411', 1]]));
put('volume-axis', ticks([[9, '4M'], [38, '2M'], [68, '0']]));
put('rsi-axis', ticks([[9, '80.0000', 1], [43, '40.0000']]));
put('stoch-axis', ticks([[22, '80.0000', 1], [47, '40.0000'], [73, '0.0000', 1]]));

const dates = [[97, 'May', 1], [182, '12'], [309, 'Jun', 1], [394, '13'], [606, '13'], [744, 'Ago', 1], [829, '11'], [978, 'Sep', 1], [1063, '13'], [1211, 'Oct', 1]];
put('time-axis', dates.map(([dx, label, month]) => rect(dx, 0, 1, 2, '#ddd') + `<text class="${month ? 'month' : ''}" x="${dx}" y="12">${label}</text>`).join('')
  + rect(479, 0, 64, 15, '#555') + '<text x="511" y="12">2022-06-30</text>');

// study legends
const row = (name, lit, values = []) => `${name}<i class="caret"></i><span class="chips">
  <button class="${lit ? 'lit' : ''}" aria-label="Mostrar"><svg><use href="#eye"/></svg></button>
  <button aria-label="Formato"><svg><use href="#gear"/></svg></button>
  <button aria-label="Quitar"><svg><use href="#cross"/></svg></button></span>`
  + values.map(([text, color]) => `<span class="value" style="color: ${color}">${text}</span>`).join('');

const studies = ['EMA (50, close, 0)', 'EMA (30, close, 0)', 'SMMA (10, close)', 'EMA (9, close, 0)', 'EMA (4, close, 0)',
  'EMA (100, close, 0)', 'EMA (200, close, 0)', 'EMA (50, close, 0)', 'Ichimoku (9, 26, 52, 26)'];
put('studies', studies.map(name => {
  const shown = name.startsWith('SMMA');
  return `<li class="${shown ? 'visible' : ''}">${row(name, !shown, shown ? [['4.0905', '#ffff00']] : [])}</li>`;
}).join(''));

document.querySelectorAll('.legend[data-name]').forEach(el => {
  const values = el.dataset.values.split(' ').map(v => v.split(':'));
  el.innerHTML = `<div class="row">${row(el.dataset.name, false, values)}</div>`;
});
```
